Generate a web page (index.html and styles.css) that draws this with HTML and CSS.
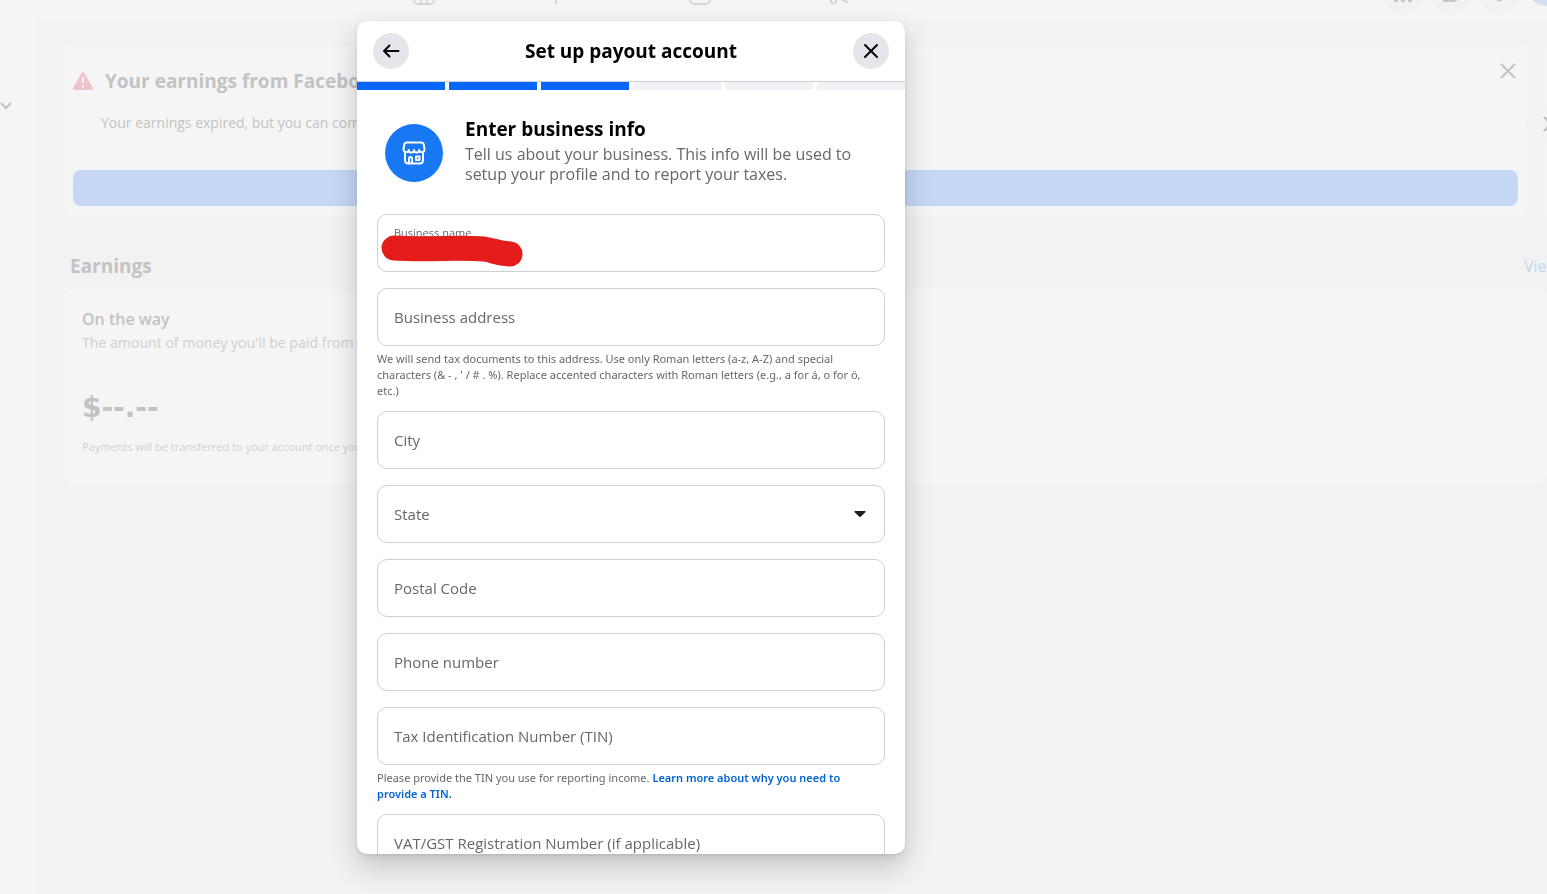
FILE: index.html
```html
<!DOCTYPE html>
<html lang="en">
<head>
	<meta charset="utf-8">
	<meta name="viewport" content="width=device-width, initial-scale=1">
	<title>Set up payout account</title>
	<link rel="stylesheet" href="styles.css">
</head>
<body>
	<div class="page">
		<nav class="topbar">
			<div class="tabs">
				<svg class="tab" viewBox="0 0 24 24"><rect x="2" y="3" width="20" height="20" rx="4"/><path d="M2 15h20M9 15v8M15 15v8"/></svg>
				<svg class="tab" viewBox="0 0 24 24"><path d="M6 4v19M6 5h12v10H6"/></svg>
				<svg class="tab" viewBox="0 0 24 24"><rect x="2" y="4" width="20" height="19" rx="4"/></svg>
				<svg class="tab" viewBox="0 0 24 24"><path d="M5 16v4a2 2 0 0 0 5 0v-4M16 19l6 2"/></svg>
			</div>
			<div class="tools">
				<div class="tool"><svg viewBox="0 0 20 20"><path d="M1 5h4v13H1zM8 5h4v13H8zM15 5h4v13h-4z"/></svg></div>
				<div class="tool"><svg viewBox="0 0 20 20"><path d="M2 4h10a7 7 0 0 1 0 14H2z"/></svg></div>
				<div class="tool"><svg viewBox="0 0 20 20"><path d="M7 14h7a3 3 0 0 1-7 0z"/></svg></div>
				<div class="avatar"></div>
			</div>
		</nav>
		<aside class="sidebar">
			<svg class="chevron" viewBox="0 0 12 8"><path d="M1 1l5 5 5-5"/></svg>
			<div class="selected"></div>
		</aside>
		<main class="content">
			<div class="notices">
				<section class="card notice">
					<div class="notice-head">
						<svg class="warning" viewBox="0 0 20 18"><path class="tri" d="M8.600 1a1.600 1.600 0 0 1 2.800 0l8.300 14.500a1.600 1.600 0 0 1-1.400 2.500H1.700a1.600 1.600 0 0 1-1.400-2.500z"/><path class="mark" d="M10 5v6M10 13.500v2"/></svg>
						<h2>Your earnings from Facebook</h2>
						<svg class="dismiss" viewBox="0 0 16 16"><path d="M1 1l14 14M15 1L1 15"/></svg>
					</div>
					<p>Your earnings expired, but you can complete</p>
					<div class="bar"></div>
				</section>
				<section class="card next"></section>
				<div class="arrow"><svg viewBox="0 0 10 16"><path d="M1 1l7 7-7 7"/></svg></div>
			</div>
			<div class="section-head">
				<h2>Earnings</h2>
				<a href="#">View</a>
			</div>
			<section class="card earnings">
				<h3>On the way</h3>
				<p class="about">The amount of money you'll be paid from</p>
				<p class="amount">$--.--</p>
				<p class="note">Payments will be transferred to your account once you</p>
			</section>
		</main>
	</div>

	<div class="overlay">
		<div class="dialog" role="dialog" aria-labelledby="dialog-title">
			<header class="dialog-head">
				<button class="round" type="button" aria-label="Back"><svg viewBox="0 0 20 20"><path d="M17.500 10H3M8.500 4.500L3 10l5.500 5.500"/></svg></button>
				<h1 id="dialog-title">Set up payout account</h1>
				<button class="round" type="button" aria-label="Close"><svg viewBox="0 0 20 20"><path d="M4 4l12 12M16 4L4 16"/></svg></button>
			</header>
			<div class="steps">
				<span class="step done"></span>
				<span class="step done"></span>
				<span class="step done"></span>
				<span class="step"></span>
				<span class="step"></span>
				<span class="step"></span>
			</div>
			<form class="form">
				<div class="intro">
					<div class="badge">
						<svg viewBox="0 0 24 24"><path d="M4.500 1.500h15q1.800 0 2.200 1.800l.8 4.700c0 4-5 4-5.300 1 0 3.400-5.200 3.400-5.200 0 0 3.400-5.200 3.400-5.200 0C6.500 12 1.500 12 1.500 8l.8-4.700q.4-1.800 2.200-1.800z"/><path d="M3 11.500V19q0 3.500 3.500 3.500h11q3.500 0 3.500-3.500v-7.500"/><path d="M7 22.500v-5q0-1.500 1.500-1.500t1.500 1.500v5M14 15.500h3.500V19H14z"/></svg>
					</div>
					<div class="intro-text">
						<h2>Enter business info</h2>
						<p>Tell us about your business. This info will be used to setup your profile and to report your taxes.</p>
					</div>
				</div>
				<div class="field filled">
					<label for="name">Business name</label>
					<input id="name" type="text">
					<svg class="redaction" viewBox="0 0 142 32"><path d="M13 13C45 15 80 12 103 14c12 2 12 4 26 5"/></svg>
				</div>
				<div class="field">
					<label for="address">Business address</label>
					<input id="address" type="text">
				</div>
				<p class="hint">We will send tax documents to this address. Use only Roman letters (a-z, A-Z) and special characters (&amp; - , ' / # . %). Replace accented characters with Roman letters (e.g., a for á, o for ö, etc.)</p>
				<div class="field">
					<label for="city">City</label>
					<input id="city" type="text">
				</div>
				<div class="field">
					<label for="state">State</label>
					<select id="state"><option></option></select>
					<svg class="caret" viewBox="0 0 12 6"><path d="M1 0h10q1 .5.3 1.300L7 5.500q-1 .8-2 0L.7 1.300Q0 .5 1 0z"/></svg>
				</div>
				<div class="field">
					<label for="postal">Postal Code</label>
					<input id="postal" type="text">
				</div>
				<div class="field">
					<label for="phone">Phone number</label>
					<input id="phone" type="tel">
				</div>
				<div class="field">
					<label for="tin">Tax Identification Number (TIN)</label>
					<input id="tin" type="text">
				</div>
				<p class="hint">Please provide the TIN you use for reporting income. <a href="#">Learn more about why you need to provide a TIN.</a></p>
				<div class="field">
					<label for="vat">VAT/GST Registration Number (if applicable)</label>
					<input id="vat" type="text">
				</div>
			</form>
		</div>
	</div>
</body>
</html>
```

FILE: styles.css
```css
*{
	box-sizing: border-box;
}
body{
	margin: 0;
	font-family: "Open Sans", "Noto Sans", sans-serif;
	background: #f2f2f2;
	overflow: hidden;
}
h1, h2, h3, p{
	margin: 0;
}
svg{
	display: block;
	fill: none;
	flex: none;
}
a{
	text-decoration: none;
}

/* dimmed page behind the dialog */
.page{
	display: grid;
	grid-template-columns: 36px minmax(0, 1fr);
	grid-template-rows: 20px 1fr;
	height: 100vh;
	color: #c3c3c3;
	overflow: hidden;
}
.topbar{
	grid-column: 1 / 3;
	display: flex;
	justify-content: space-between;
	background: #f5f5f5;
	padding-left: 412px;
	overflow: hidden;
}
.tabs{
	display: flex;
	align-items: flex-end;
	gap: 114px;
	padding-bottom: 15px;
}
.tab{
	width: 24px;
	height: 24px;
	stroke: #d6d6d6;
	stroke-width: 2;
}
.tools{
	display: flex;
	align-items: flex-end;
	gap: 8px;
	padding-bottom: 6px;
	margin-right: -20px;
}
.tool, .avatar{
	display: flex;
	align-items: center;
	justify-content: center;
	width: 40px;
	height: 40px;
	border-radius: 50%;
	background: #f1f3f3;
}
.tool svg{
	width: 20px;
	height: 20px;
	fill: #c6c6c6;
}
.avatar{
	margin-bottom: 8px;
	background: #d3e0f3;
}
.sidebar{
	background: #f5f5f5;
	padding-top: 82px;
}
.chevron{
	width: 12px;
	height: 8px;
	stroke: #c3c3c3;
	stroke-width: 2;
}
.selected{
	height: 56px;
	width: 30px;
	margin-top: 28px;
	background: #f3f5f6;
	border-radius: 0 8px 8px 0;
}
.content{
	padding: 26px 0 0 28px;
	overflow: hidden;
}
.card{
	background: #f5f5f5;
	border-radius: 8px;
}
.notices{
	display: flex;
	gap: 16px;
	position: relative;
}
.notice{
	flex: 0 0 calc(100% - 19px);
	padding: 15px 10px 10px 9px;
}
.notice-head{
	display: flex;
	align-items: center;
	gap: 12px;
	line-height: 40px;
}
.notice-head h2{
	flex: 1;
	font-size: 19px;
}
.warning{
	width: 20px;
	height: 18px;
}
.tri{
	fill: #f0c3c9;
}
.mark{
	stroke: #f5f5f5;
	stroke-width: 2;
}
.dismiss{
	width: 16px;
	height: 16px;
	margin: -20px 2px 0 0;
	stroke: #c3c3c3;
	stroke-width: 2;
}
.notice p{
	padding: 12px 0 0 28px;
	font-size: 14px;
	line-height: 20px;
}
.bar{
	height: 36px;
	margin-top: 37px;
	border-radius: 8px;
	background: #c5d7f4;
}
.next{
	flex: 0 0 300px;
}
.arrow{
	position: absolute;
	right: -19px;
	top: 58px;
	width: 40px;
	height: 40px;
	padding: 12px 0 0 17px;
	border-radius: 50%;
	background: #f1f3f3;
}
.arrow svg{
	width: 10px;
	height: 16px;
	stroke: #bcbcbc;
	stroke-width: 2;
}
.section-head{
	display: flex;
	justify-content: space-between;
	align-items: center;
	padding: 35px 0 9px 6px;
	margin-right: -12px;
	line-height: 30px;
}
.section-head h2{
	font-size: 19px;
}
.section-head a{
	color: #c5d7ee;
	font-size: 16px;
}
.earnings{
	padding: 16px 18px 28px;
}
.earnings h3{
	font-size: 16px;
	font-weight: 600;
	line-height: 26px;
}
.about{
	color: #d2d2d2;
	font-family: "Noto Sans", sans-serif;
	font-size: 14px;
	line-height: 22px;
}
.amount{
	margin-top: 32px;
	font-family: "DejaVu Sans", sans-serif;
	font-size: 28px;
	font-weight: 700;
	line-height: 44px;
}
.note{
	margin-top: 8px;
	color: #d2d2d2;
	font-size: 11px;
	line-height: 18px;
}

/* dialog */
.overlay{
	position: fixed;
	inset: 0;
	display: grid;
	grid-template-columns: 357fr 548px 642fr;
	padding: 21px 0 40px;
}
.dialog{
	grid-column: 2;
	display: flex;
	flex-direction: column;
	min-height: 0;
	overflow: hidden;
	background: #fff;
	border-radius: 10px;
	box-shadow: 0 12px 28px rgba(0, 0, 0, .2), 0 2px 4px rgba(0, 0, 0, .1);
}
.dialog-head{
	display: flex;
	align-items: center;
	justify-content: space-between;
	padding: 12px 16px;
	border-bottom: 1px solid #ced0d4;
}
.dialog-head h1{
	font-size: 19px;
	line-height: 24px;
}
.round{
	display: flex;
	align-items: center;
	justify-content: center;
	width: 36px;
	height: 36px;
	padding: 0;
	border: 0;
	border-radius: 50%;
	background: #e4e6eb;
	cursor: pointer;
}
.round svg{
	width: 20px;
	height: 20px;
	stroke: #050505;
	stroke-width: 2;
	stroke-linecap: round;
	stroke-linejoin: round;
}
.steps{
	display: flex;
	gap: 4px;
}
.step{
	flex: 1;
	height: 8px;
	background: #f0f2f5;
}
.step.done{
	background: #0866ff;
}
.form{
	flex: 1;
	min-height: 0;
	overflow: hidden;
	padding: 27px 20px 0;
}
.intro{
	display: flex;
	align-items: center;
	gap: 22px;
	padding: 0 8px;
	margin-bottom: 30px;
}
.badge{
	display: flex;
	align-items: center;
	justify-content: center;
	flex: none;
	width: 58px;
	height: 58px;
	margin-top: 4px;
	border-radius: 50%;
	background: #1877f2;
}
.badge svg{
	width: 24px;
	height: 24px;
	stroke: #fff;
	stroke-width: 2;
	stroke-linejoin: round;
}
.intro h2{
	font-size: 19px;
	line-height: 24px;
	margin-bottom: 3px;
}
.intro p{
	color: #65676b;
	font-size: 16px;
	line-height: 20px;
}
.field{
	position: relative;
	display: grid;
	height: 58px;
	margin-bottom: 16px;
	border: 1px solid #ced0d4;
	border-radius: 10px;
}
.field label, .field input, .field select{
	grid-area: 1 / 1;
}
.field label{
	align-self: center;
	padding: 0 16px;
	color: #65676b;
	font-size: 15px;
	line-height: 20px;
	pointer-events: none;
	z-index: 1;
}
.field input, .field select{
	width: 100%;
	min-width: 0;
	padding: 20px 16px 0;
	border: 0;
	border-radius: 10px;
	outline: 0;
	background: transparent;
	appearance: none;
	font: inherit;
}
.filled label{
	align-self: start;
	padding-top: 10px;
	font-size: 11px;
	line-height: 16px;
}
.redaction{
	position: absolute;
	left: 3px;
	top: 20px;
	z-index: 2;
	width: 142px;
	height: 32px;
	stroke: #e51c1c;
	stroke-width: 25;
	stroke-linecap: round;
	stroke-linejoin: round;
}
.caret{
	grid-area: 1 / 1;
	align-self: center;
	justify-self: end;
	width: 12px;
	height: 6px;
	margin-right: 18px;
	fill: #1c1e21;
	pointer-events: none;
}
.hint{
	margin: -11px 0 12px;
	padding-right: 8px;
	color: #65676b;
	font-family: "Noto Sans", sans-serif;
	font-size: 11px;
	line-height: 16px;
}
.hint a{
	color: #0064d1;
	font-weight: 600;
}
```
